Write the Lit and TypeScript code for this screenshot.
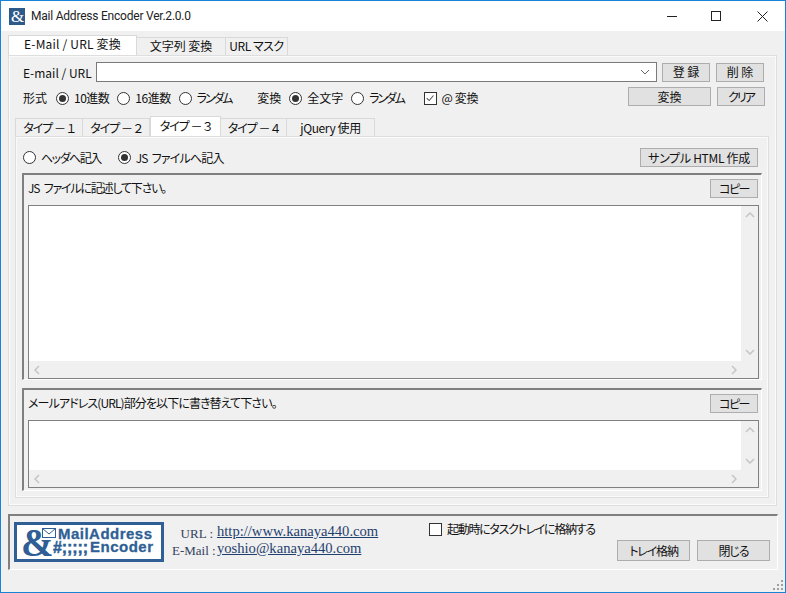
import { LitElement, html, css } from "lit";
import { customElement } from "lit/decorators.js";

@customElement("app-root")
export class AppRoot extends LitElement {
  static styles = css`
    :host { display: block; width: 786px; height: 593px; }
    * { box-sizing: border-box; }
    .win { width: 786px; height: 593px; border: 1px solid #1883d7; background: #f0f0f0; display: flex; flex-direction: column;
      font: 12px/16px "Noto Sans CJK JP", "Noto Sans", sans-serif; font-feature-settings: "palt"; color: #111; overflow: hidden; }
    .title { height: 30px; flex: none; background: #fff; display: flex; align-items: center; padding-left: 8px; color: #222; }
    .title .name { margin-left: 5px; font: 12px/16px Roboto, sans-serif; letter-spacing: -.22px; }
    .ctl { margin-left: auto; display: flex; margin-right: 17px; gap: 34px; align-items: center; }
    .ctl .close { margin-left: 2px; }
    .main { padding: 4px 0 0 7px; flex: none; }
    .tabs { display: flex; align-items: flex-end; height: 20px; }
    .tab { height: 18px; border: 1px solid #d9d9d9; border-bottom: 0; border-left: 0; display: flex; align-items: center; justify-content: center; background: #f0f0f0; white-space: pre; }
    .tab.sel { height: 20px; background: #fff; border: 1px solid #d9d9d9; border-bottom: 0; padding-bottom: 2px; }
    .main > .tabs .tab { padding-bottom: 1px; }
    .main > .tabs .tab.sel { padding-bottom: 4px; letter-spacing: .2px; }
    .w129 { width: 129px; } .w89 { width: 89px; } .w62 { width: 62px; }
    .w68 { width: 68px; border-left: 1px solid #d9d9d9; } .w67 { width: 67px; } .w71 { width: 71px; } .w66 { width: 66px; } .w88 { width: 88px; }
    .tab.ty { letter-spacing: -1px; }
    .panel { width: 769px; height: 451px; border: 1px solid #dedede; background: #f0f0f0; box-shadow: inset 0 0 0 1px #fafafa; padding-top: 6px; }
    .form { margin: 0 11px 0 14px; display: flex; flex-direction: column; gap: 5px; }
    .row { display: flex; align-items: center; }
    .row1 { height: 20px; }
    .row2 { height: 19px; }
    .row2 > :not(.right) { margin-top: 3px; }
    .lbl { width: 73px; white-space: pre; padding-top: 1px; }
    .combo { width: 561px; height: 20px; background: #fff; border: 1px solid #7a7a7a; display: flex; align-items: center; justify-content: flex-end; padding-right: 6px; margin-right: 5px; }
    button { font: inherit; font-feature-settings: "palt"; color: inherit; background: #e1e1e1; border: 1px solid #adadad; padding: 0; height: 19px; width: 48px; display: block; white-space: pre; line-height: 16px; }
    .g6 { margin-left: 6px; }
    .opt { display: flex; align-items: center; gap: 5px; white-space: pre; }
    .radio { width: 13px; height: 13px; border: 1px solid #333; border-radius: 50%; background: #fff; display: flex; align-items: center; justify-content: center; flex: none; }
    .radio.on::after { content: ""; width: 7px; height: 7px; border-radius: 50%; background: #333; }
    .check { width: 13px; height: 13px; border: 1px solid #333; background: #fff; flex: none; display: block; }
    .form .opt { margin-left: 8px; }
    .form .opt.first { margin-left: 9px; }
    .form .opt.second { margin-left: 8px; }
    .spacer26 { margin-left: 26px; }
    .form .opt.ck { margin-left: 20px; }
    .right { margin-left: auto; display: flex; }
    .wide { width: 83px; }
    .subtabs { margin: 10px 0 0 6px; }
    .sub { width: 754px; height: 362px; margin-left: 6px; border: 1px solid #dedede; box-shadow: inset 0 0 0 1px #fafafa; padding: 11px 0 0 6px; }
    .sub-top { display: flex; align-items: center; height: 19px; padding-right: 10px; }
    .sub-top .opt { margin-left: 1px; }
    .sub-top .opt + .opt { margin-left: 17px; }
    .sample { width: 118px; margin-left: auto; }
    .group { width: 740px; border-top: 2px solid #808080; border-left: 2px solid #808080; border-right: 1px solid #fff; border-bottom: 1px solid #fff; padding: 4px 0 0 4px; }
    .g1 { height: 207px; margin-top: 6px; }
    .g2 { height: 103px; margin-top: 8px; }
    .ghead { display: flex; align-items: center; height: 19px; justify-content: space-between; width: 730px; }
    .ghead span { margin-top: -1px; }
    .ta { width: 731px; margin-top: 7px; background: #fff; border: 1px solid #808080; display: grid; grid-template-columns: 1fr 17px; grid-template-rows: 1fr 17px; }
    .g1 .ta { height: 174px; }
    .g2 .ta { height: 68px; }
    .vbar { background: #f0f0f0; grid-column: 2; grid-row: 1; display: flex; flex-direction: column; justify-content: space-between; align-items: center; padding: 6px 0; }
    .hbar { background: #f0f0f0; grid-column: 1 / span 2; grid-row: 2; display: flex; justify-content: space-between; align-items: center; padding: 0 21px 0 5px; }
    .bottom { margin: 8px 0 0 7px; width: 770px; height: 56px; flex: none; border-top: 2px solid #808080; border-left: 2px solid #808080; border-bottom: 1px solid #fff; border-right: 1px solid #fff; display: flex; padding: 6px 0 0 4px; }
    .logo { width: 150px; height: 40px; display: block; flex: none; overflow: visible; }
    .contact { margin: 1px 0 0 8px; font-family: "Liberation Serif", serif; width: 250px; display: grid; grid-template-columns: 41px auto; grid-auto-rows: 17px; column-gap: 4px; color: #33415c; font-size: 13px; line-height: 17px; text-align: right; white-space: pre; }
    .contact span { padding-top: 2px; }
    .contact a { font-size: 14.6px; color: #1f3f6f; text-decoration: underline; text-align: left; }
    .side { display: flex; flex-direction: column; margin-left: auto; width: 348px; padding-right: 7px; }
    .side .opt { margin-top: -1px; margin-left: 0; height: 16px; }
    .btm-btns { display: flex; justify-content: flex-end; gap: 7px; margin-top: 3px; }
    .btm-btns button { width: 73px; height: 21px; }
    .status { flex: 1; position: relative; }
    .grip { position: absolute; right: 1px; bottom: 1px; }
    .s03 { letter-spacing: -.3px; } .s04 { letter-spacing: -.4px; } .s05 { letter-spacing: -.5px; } .s08 { letter-spacing: -.8px; word-spacing: 2px; }
    .s09 { letter-spacing: -.9px; } .s1 { letter-spacing: -1px; } .s11 { letter-spacing: -1.2px; word-spacing: 3px; } .s12 { letter-spacing: -1.2px; }
    .s13 { letter-spacing: -1.3px; } .s15 { letter-spacing: -1.5px; } .s2 { letter-spacing: -2px; } .s22 { letter-spacing: -2.2px; }
  `;

  private scrollbars() {
    return html`<div></div>
      <div class="vbar">
        <svg width="10" height="6"><path d="M1 5 L5 1 L9 5" fill="none" stroke="#c4c4c4" stroke-width="1.5"/></svg>
        <svg width="10" height="6"><path d="M1 1 L5 5 L9 1" fill="none" stroke="#c4c4c4" stroke-width="1.5"/></svg>
      </div>
      <div class="hbar">
        <svg width="6" height="10"><path d="M5 1 L1 5 L5 9" fill="none" stroke="#c4c4c4" stroke-width="1.5"/></svg>
        <svg width="6" height="10"><path d="M1 1 L5 5 L1 9" fill="none" stroke="#c4c4c4" stroke-width="1.5"/></svg>
      </div>`;
  }
  private radio(label: string, on = false, cls = "", t = "") {
    return html`<span class="opt ${cls}"><span class="radio ${on ? "on" : ""}"></span><span class=${t}>${label}</span></span>`;
  }

  render() {
    return html`<div class="win">
      <div class="title">
        <svg width="17" height="17" viewBox="0 0 17 17"><rect width="16" height="17" fill="#2e5a8a"/><text x="8.5" y="14" text-anchor="middle" font-family="Liberation Serif" font-size="17" fill="#fff">&amp;</text></svg>
        <span class="name">Mail Address Encoder Ver.2.0.0</span>
        <div class="ctl">
          <svg width="10" height="10"><path d="M0 5.5H10" stroke="#222"/></svg>
          <svg width="10" height="10"><rect x=".5" y=".5" width="9" height="9" fill="none" stroke="#222"/></svg>
          <svg class="close" width="11" height="11"><path d="M.5 .5L10.5 10.5M10.5 .5L.5 10.5" stroke="#222"/></svg>
        </div>
      </div>
      <div class="main">
        <div class="tabs">
          <div class="tab sel w129">E-Mail / URL 変換</div>
          <div class="tab w89">文字列 変換</div>
          <div class="tab w62 s05">URL マスク</div>
        </div>
        <div class="panel">
          <div class="form">
            <div class="row row1">
              <span class="lbl">E-mail / URL</span>
              <div class="combo"><svg width="10" height="6"><path d="M1 1L5 5L9 1" fill="none" stroke="#666"/></svg></div>
              <button>登 録</button><button class="g6">削 除</button>
            </div>
            <div class="row row2">
              <span>形式</span>
              ${this.radio("10進数", true, "first", "s05")}${this.radio("16進数", false, "", "s05")}${this.radio("ランダム", false, "", "s22")}
              <span class="spacer26">変換</span>
              ${this.radio("全文字", true, "second")}${this.radio("ランダム", false, "", "s22")}
              <span class="opt ck"><svg class="check" viewBox="0 0 13 13"><path d="M2 6L5 9L10 3" fill="none" stroke="#555" stroke-width="1.2"/></svg><span class="s04">@ 変換</span></span>
              <div class="right"><button class="wide">変換</button><button class="g6 s2">クリア</button></div>
            </div>
          </div>
          <div class="tabs subtabs">
            <div class="tab ty w68">タイプ － １</div>
            <div class="tab ty w67">タイプ － ２</div>
            <div class="tab ty sel w71">タイプ － ３</div>
            <div class="tab ty w66">タイプ － ４</div>
            <div class="tab w88 s04">jQuery 使用</div>
          </div>
          <div class="sub">
            <div class="sub-top">
              ${this.radio("ヘッダへ記入", false, "", "s15")}${this.radio("JS ファイルへ記入", true, "", "s08")}
              <button class="sample s03">サンプル HTML 作成</button>
            </div>
            <div class="group g1">
              <div class="ghead"><span class="s11">JS ファイルに記述して下さい。</span><button class="s15">コピー</button></div>
              <div class="ta">${this.scrollbars()}</div>
            </div>
            <div class="group g2">
              <div class="ghead"><span class="s09">メールアドレス(URL)部分を以下に書き替えて下さい。</span><button class="s15">コピー</button></div>
              <div class="ta">${this.scrollbars()}</div>
            </div>
          </div>
        </div>
      </div>
      <div class="bottom">
        <svg class="logo" viewBox="0 0 150 40">
          <rect x="1.5" y="1.5" width="147" height="37" fill="#fff" stroke="#2f5f94" stroke-width="3"/>
          <text x="7" y="34" font-family="Liberation Serif" font-weight="bold" font-size="39" fill="#2f5f94">&amp;</text>
          <rect x="28.5" y="6.5" width="13" height="9" fill="#fff" stroke="#2f5f94"/>
          <path d="M28.5 6.5L35 12L41.5 6.5" fill="none" stroke="#2f5f94"/>
          <text x="44" y="17" font-family="Liberation Sans" font-weight="bold" font-size="15" fill="#2f5f94" stroke="#2f5f94" stroke-width=".3" textLength="94">MailAddress</text>
          <text x="39" y="31" font-family="Liberation Sans" font-weight="bold" font-size="16" fill="#2f5f94" stroke="#2f5f94" stroke-width=".5" textLength="35">#;;;;;</text>
          <text x="76" y="30" font-family="Liberation Sans" font-weight="bold" font-size="15" fill="#2f5f94" stroke="#2f5f94" stroke-width=".3" textLength="63">Encoder</text>
        </svg>
        <div class="contact">
          <span>URL :</span><a>http://www.kanaya440.com</a>
          <span>E-Mail :</span><a>yoshio@kanaya440.com</a>
        </div>
        <div class="side">
          <span class="opt"><span class="check"></span><span class="s13">起動時にタスクトレイに格納する</span></span>
          <div class="btm-btns"><button class="s12">トレイ格納</button><button class="s1">閉じる</button></div>
        </div>
      </div>
      <div class="status">
        <svg class="grip" width="11" height="11" fill="#a0a0a0"><rect x="8" y="0" width="2" height="2"/><rect x="4" y="4" width="2" height="2"/><rect x="8" y="4" width="2" height="2"/><rect x="0" y="8" width="2" height="2"/><rect x="4" y="8" width="2" height="2"/><rect x="8" y="8" width="2" height="2"/></svg>
      </div>
    </div>`;
  }
}
